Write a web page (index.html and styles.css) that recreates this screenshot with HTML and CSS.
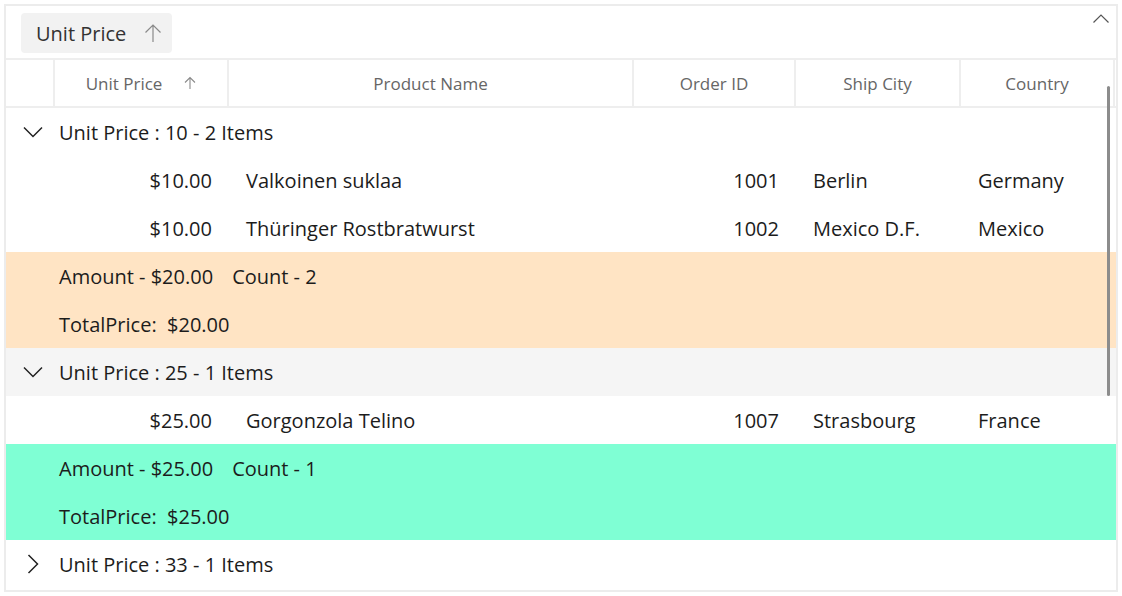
FILE: index.html
```html
<!DOCTYPE html>
<html lang="en">
<head>
  <meta charset="UTF-8">
  <title>Orders - Grouped by Unit Price</title>
  <link rel="stylesheet" href="styles.css">
</head>
<body>

  <div class="grid">
    <div class="group-panel">
      <div class="chip">
        <span>Unit Price</span>
        <svg class="chip-arrow" width="18" height="20" viewBox="0 0 18 20"><path d="M9 19V2M1.5 9.5L9 2l7.5 7.5" fill="none" stroke="#8a8a8a" stroke-width="1.2"/></svg>
      </div>
      <svg class="collapse" width="18" height="12" viewBox="0 0 18 12"><path d="M1.5 9.5L9 2l7.5 7.5" fill="none" stroke="#555" stroke-width="1.2"/></svg>
    </div>

    <div class="header row-grid">
      <div class="hcell"></div>
      <div class="hcell">Unit Price
        <svg class="sort" width="12" height="14" viewBox="0 0 12 14"><path d="M6 13V1.5M1 6.5L6 1.5l5 5" fill="none" stroke="#8a8a8a" stroke-width="1.1"/></svg>
      </div>
      <div class="hcell">Product Name</div>
      <div class="hcell">Order ID</div>
      <div class="hcell">Ship City</div>
      <div class="hcell">Country</div>
      <div></div>
    </div>

    <div class="body">
      <div class="group-row">
        <svg class="chev" width="20" height="12" viewBox="0 0 20 12"><path d="M1 1.5l9 9 9-9" fill="none" stroke="#222" stroke-width="1.5"/></svg>
        Unit Price : 10 - 2 Items
      </div>
      <div class="row row-grid">
        <div></div><div class="num">$10.00</div><div class="txt">Valkoinen suklaa</div><div class="num">1001</div><div class="txt">Berlin</div><div class="txt">Germany</div><div></div>
      </div>
      <div class="row row-grid">
        <div></div><div class="num">$10.00</div><div class="txt">Thüringer Rostbratwurst</div><div class="num">1002</div><div class="txt">Mexico D.F.</div><div class="txt">Mexico</div><div></div>
      </div>
      <div class="summary orange">Amount - $20.00<span class="count">Count - 2</span></div>
      <div class="summary orange">TotalPrice:&nbsp; $20.00</div>

      <div class="group-row shaded">
        <svg class="chev" width="20" height="12" viewBox="0 0 20 12"><path d="M1 1.5l9 9 9-9" fill="none" stroke="#222" stroke-width="1.5"/></svg>
        Unit Price : 25 - 1 Items
      </div>
      <div class="row row-grid">
        <div></div><div class="num">$25.00</div><div class="txt">Gorgonzola Telino</div><div class="num">1007</div><div class="txt">Strasbourg</div><div class="txt">France</div><div></div>
      </div>
      <div class="summary green">Amount - $25.00<span class="count">Count - 1</span></div>
      <div class="summary green">TotalPrice:&nbsp; $25.00</div>

      <div class="group-row">
        <svg class="chev" width="20" height="20" viewBox="0 0 20 20"><path d="M5.5 1l9 9-9 9" fill="none" stroke="#222" stroke-width="1.5"/></svg>
        Unit Price : 33 - 1 Items
      </div>

      <div class="scrollbar"></div>
    </div>
  </div>

</body>
</html>
```

FILE: styles.css
```css
body {
  margin: 0;
  font-family: "Open Sans", "Noto Sans", sans-serif;
  background: #fff;
  color: #1c1c1c;
}

.grid {
  margin: 4px;
  width: 1110px;
  height: 584px;
  border: 2px solid #ececec;
  overflow: hidden;
}

.group-panel {
  position: relative;
  height: 54px;
  border-bottom: 2px solid #eeeeee;
  padding: 7px 0 0 15px;
  box-sizing: border-box;
}

.chip {
  display: inline-flex;
  align-items: center;
  height: 40px;
  width: 151px;
  box-sizing: border-box;
  padding: 0 0 0 15px;
  background: #f2f2f2;
  border-radius: 4px;
  font-size: 20px;
  color: #333;
}

.chip-arrow {
  margin-left: 18px;
}

.collapse {
  position: absolute;
  right: 6px;
  top: 7px;
}

.row-grid {
  display: grid;
  grid-template-columns: 49px 174px 405px 162px 165px 154px 1fr;
}

.header {
  height: 48px;
  border-bottom: 2px solid #eeeeee;
  box-sizing: border-box;
}

.hcell {
  border-right: 2px solid #eeeeee;
  display: flex;
  align-items: center;
  justify-content: center;
  font-size: 17px;
  color: #666;
}

.sort {
  margin-left: 22px;
}

.body {
  position: relative;
}

.row {
  height: 48px;
  align-items: center;
  font-size: 20px;
}

.num {
  text-align: right;
  padding-right: 17px;
}

.txt {
  padding-left: 17px;
}

.group-row {
  display: flex;
  align-items: center;
  height: 48px;
  font-size: 20px;
}

.group-row.shaded {
  background: #f5f5f5;
}

.chev {
  width: 20px;
  margin: 0 16px 0 17px;
}

.summary {
  height: 48px;
  display: flex;
  align-items: center;
  padding-left: 53px;
  font-size: 20px;
}

.count {
  margin-left: 19px;
}

.orange {
  background: #ffe4c4;
}

.green {
  background: #7fffd4;
}

.scrollbar {
  position: absolute;
  left: 1101px;
  top: -22px;
  width: 3px;
  height: 310px;
  border-radius: 2px;
  background: #8c8c8c;
}
```
